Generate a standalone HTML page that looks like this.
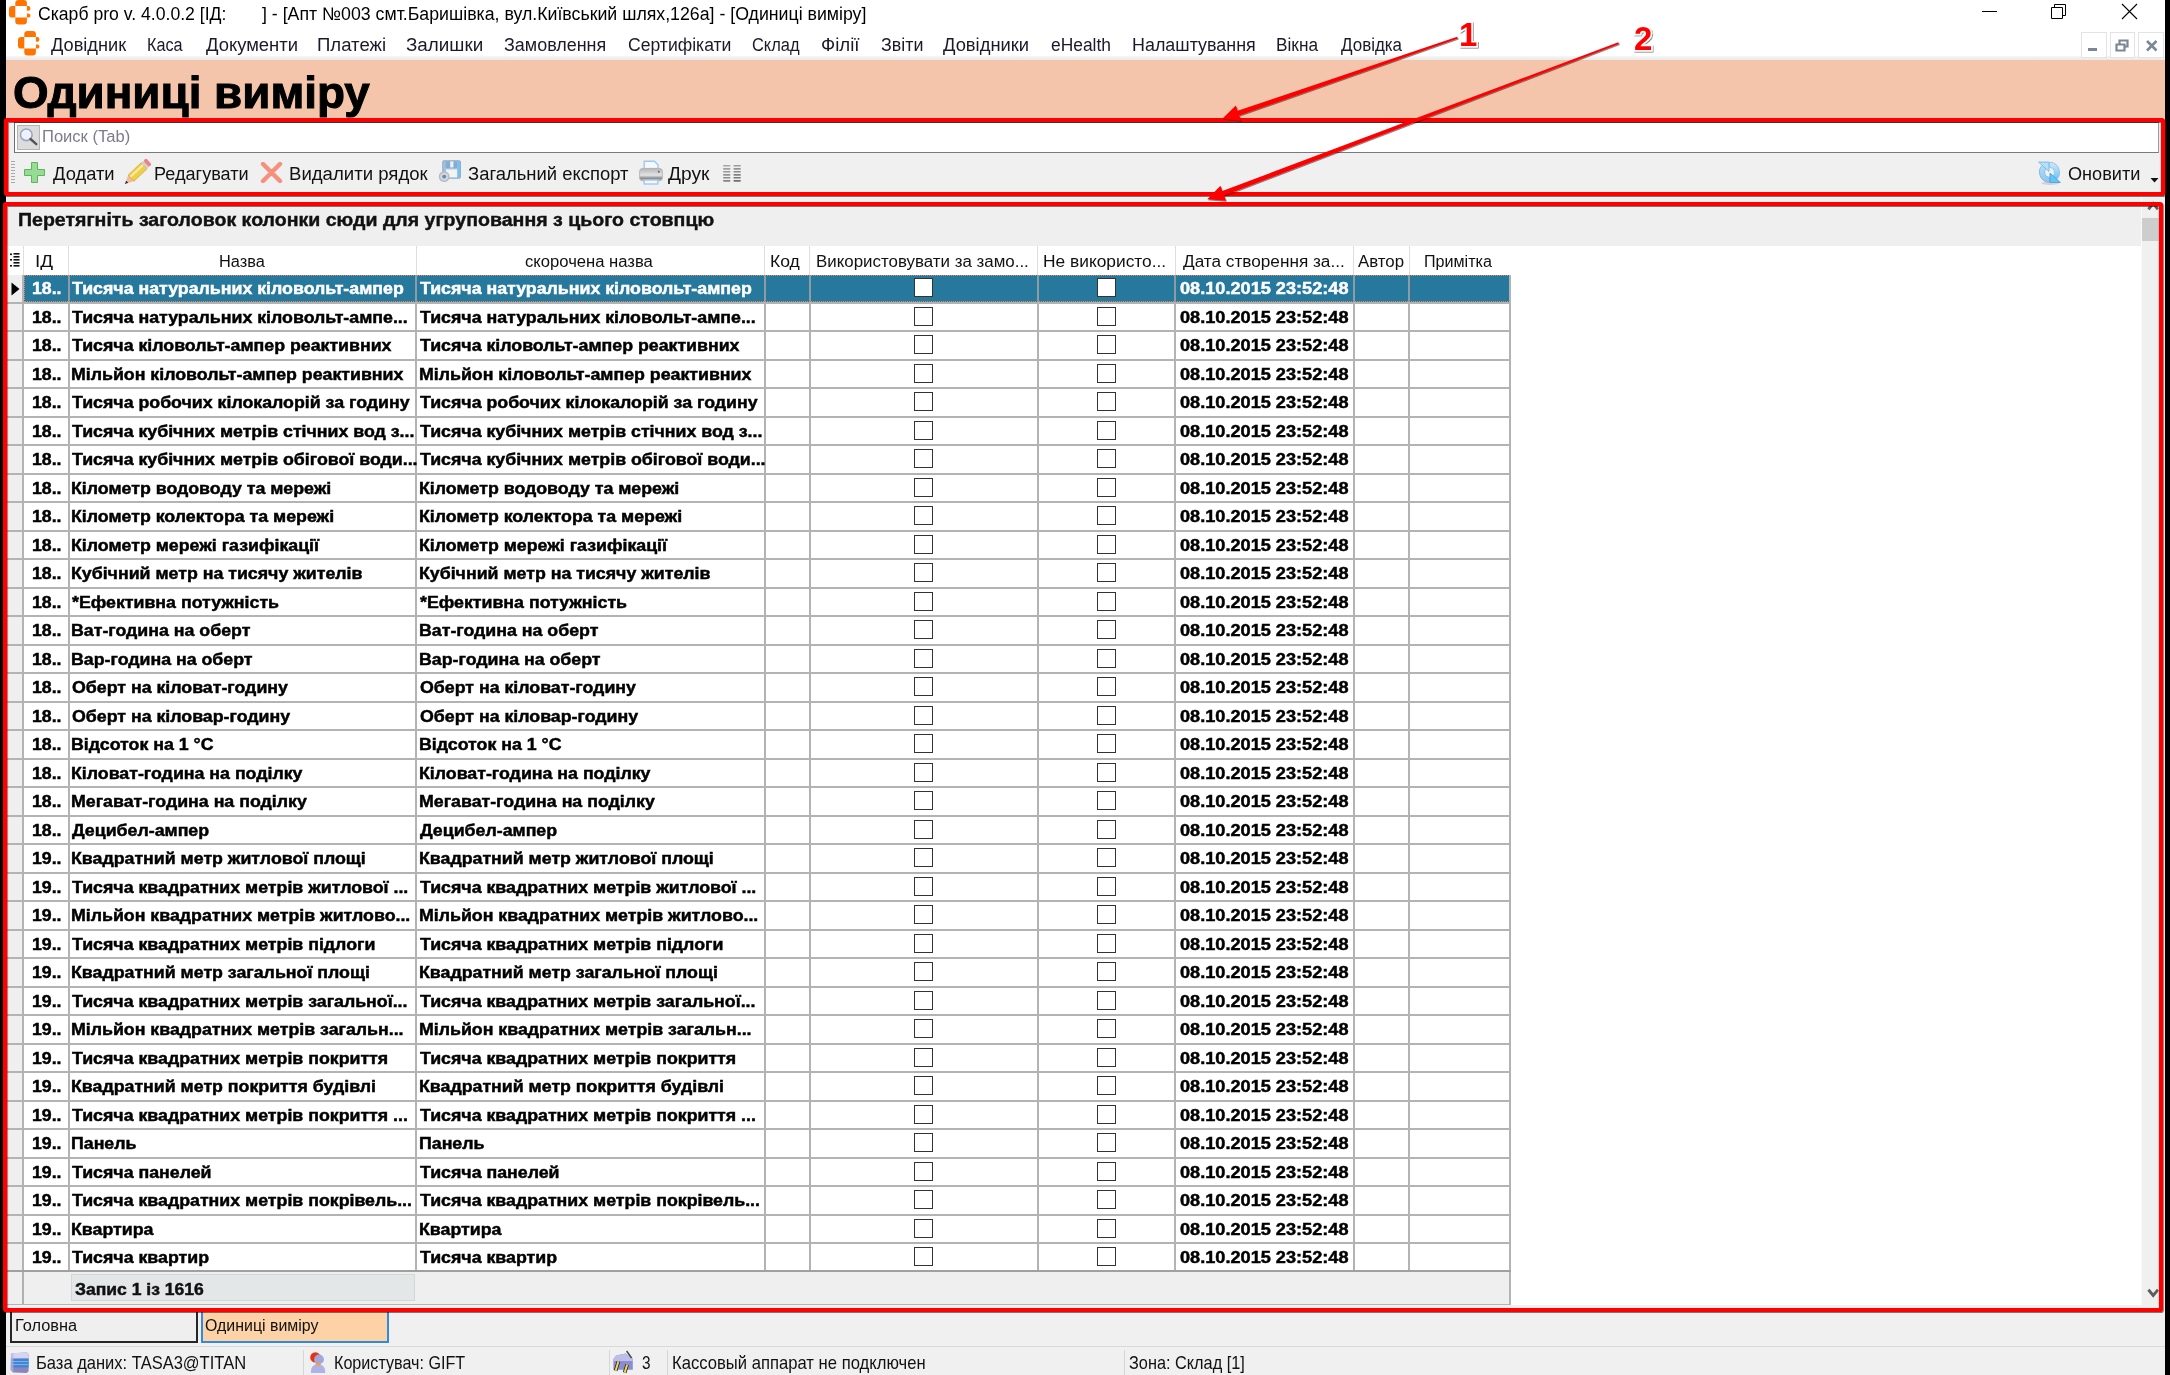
<!DOCTYPE html>
<html><head><meta charset="utf-8"><title>Одиниці виміру</title>
<style>
html,body{margin:0;padding:0;}
body{width:2170px;height:1375px;overflow:hidden;position:relative;background:#000;font-family:"Liberation Sans",sans-serif;}
.t{position:absolute;white-space:nowrap;transform-origin:0 0;}
</style></head><body>
<div style="position:absolute;left:6px;top:0px;width:2159px;height:56px;background:#fff"></div>
<div style="position:absolute;left:6px;top:56px;width:2159px;height:4px;background:linear-gradient(#f6f6f6,#e9e9e9)"></div>
<div style="position:absolute;left:6px;top:60px;width:2159px;height:58px;background:#f4c4ab"></div>
<div style="position:absolute;left:6px;top:118px;width:2159px;height:1257px;background:#f0f0f0"></div>
<div style="position:absolute;left:1982px;top:11px;width:15px;height:1px;background:#000"></div>
<svg style="position:absolute;left:2049px;top:1px" width="20" height="20"><path d="M2.5 6.5h11v11h-11z M5.5 6.5v-3h11v11h-3" fill="none" stroke="#000" stroke-width="1"/></svg>
<svg style="position:absolute;left:2120px;top:2px" width="20" height="20"><path d="M2 2L17 17M17 2L2 17" stroke="#000" stroke-width="1.1"/></svg>
<svg style="position:absolute;left:17.7px;top:31.3px" width="22" height="25" viewBox="0 0 22 25">
<g fill="#ff7400">
<path d="M6.3 6.1V3.2Q6.3 0 9.5 0H14.7Q17.9 0 17.9 3.2V6.1Z"/>
<path d="M6.3 6.1H3.2Q0 6.1 0 9.3V14.4Q0 17.6 3.2 17.6H6.3Z"/>
<path d="M6.3 17.6V21.2Q6.3 24.4 9.5 24.4H14.7Q17.9 24.4 17.9 21.2V17.6Z"/>
<path d="M17.9 6.1H19.3Q21.4 6.1 21.4 8.3V9.0Q21.4 10.7 19.3 10.7H17.9Z"/>
<path d="M17.9 13.5H19.3Q21.4 13.5 21.4 15.2V15.9Q21.4 17.6 19.3 17.6H17.9Z"/>
</g></svg>
<svg style="position:absolute;left:9px;top:-0.4px" width="22" height="25" viewBox="0 0 22 25">
<g fill="#ff7400">
<path d="M6.3 6.1V3.2Q6.3 0 9.5 0H14.7Q17.9 0 17.9 3.2V6.1Z"/>
<path d="M6.3 6.1H3.2Q0 6.1 0 9.3V14.4Q0 17.6 3.2 17.6H6.3Z"/>
<path d="M6.3 17.6V21.2Q6.3 24.4 9.5 24.4H14.7Q17.9 24.4 17.9 21.2V17.6Z"/>
<path d="M17.9 6.1H19.3Q21.4 6.1 21.4 8.3V9.0Q21.4 10.7 19.3 10.7H17.9Z"/>
<path d="M17.9 13.5H19.3Q21.4 13.5 21.4 15.2V15.9Q21.4 17.6 19.3 17.6H17.9Z"/>
</g></svg>
<div style="position:absolute;left:2081px;top:32px;width:25.5px;height:25.5px;border:1px solid #e3e3e3;box-sizing:border-box;background:#fff"></div>
<div style="position:absolute;left:2109.5px;top:32px;width:25.5px;height:25.5px;border:1px solid #e3e3e3;box-sizing:border-box;background:#fff"></div>
<div style="position:absolute;left:2138px;top:32px;width:25.5px;height:25.5px;border:1px solid #e3e3e3;box-sizing:border-box;background:#fff"></div>
<div style="position:absolute;left:2088px;top:48px;width:9px;height:3px;background:#7b8794"></div>
<svg style="position:absolute;left:2115px;top:38px" width="15" height="15"><path d="M1.5 6.5h8v6h-8z M4.5 5.5v-3h8v6h-3" fill="none" stroke="#7b8794" stroke-width="2.2"/></svg>
<svg style="position:absolute;left:2145px;top:39px" width="14" height="14"><path d="M2 2L11.5 11.5M11.5 2L2 11.5" stroke="#7b8794" stroke-width="2.6"/></svg>
<div style="position:absolute;left:14px;top:122px;width:2145px;height:31px;background:#fff;border-left:1px solid #6e6e6e;border-top:1px solid #6e6e6e;border-bottom:1px solid #7a7a7a;border-right:1px solid #9a9a9a;box-sizing:border-box"></div>
<div style="position:absolute;left:17px;top:125px;width:23.299999999999997px;height:25px;background:#dcdcdc;border:1px solid #b4b4b4;box-sizing:border-box"></div>
<svg style="position:absolute;left:17px;top:125px" width="24" height="25"><circle cx="9.3" cy="9.8" r="5.8" fill="#eef2ff" stroke="#9aa6bc" stroke-width="1.6"/><path d="M13.5 14l5.8 5.2" stroke="#555" stroke-width="2.4" stroke-linecap="round"/></svg>
<div style="position:absolute;left:10.5px;top:160.5px;width:4.5px;height:1.3000000000000114px;background:#a8a8a8"></div>
<div style="position:absolute;left:10.5px;top:163.5px;width:4.5px;height:1.3000000000000114px;background:#a8a8a8"></div>
<div style="position:absolute;left:10.5px;top:166.5px;width:4.5px;height:1.3000000000000114px;background:#a8a8a8"></div>
<div style="position:absolute;left:10.5px;top:169.5px;width:4.5px;height:1.3000000000000114px;background:#a8a8a8"></div>
<div style="position:absolute;left:10.5px;top:172.5px;width:4.5px;height:1.3000000000000114px;background:#a8a8a8"></div>
<div style="position:absolute;left:10.5px;top:175.5px;width:4.5px;height:1.3000000000000114px;background:#a8a8a8"></div>
<div style="position:absolute;left:10.5px;top:178.5px;width:4.5px;height:1.3000000000000114px;background:#a8a8a8"></div>
<div style="position:absolute;left:10.5px;top:181.5px;width:4.5px;height:1.3000000000000114px;background:#a8a8a8"></div>
<svg style="position:absolute;left:24px;top:162px" width="21" height="21"><path d="M7.5 0.5h6v7h7v6h-7v7h-6v-7h-7v-6h7z" fill="#97dc94" stroke="#5fb45c" stroke-width="1"/></svg>
<svg style="position:absolute;left:120px;top:155px" width="40" height="35">
<g transform="translate(4.8 29.1) rotate(-43.5)">
<path d="M0 0L3.6 -1.7V1.7Z" fill="#333"/><path d="M3.6 -1.7L8.6 -4.2V4.2L3.6 1.7Z" fill="#f6b89c"/>
<rect x="8.6" y="-4.2" width="18" height="8.4" fill="#f0cf48" stroke="#c9a436" stroke-width="0.7"/><rect x="9" y="-2.4" width="17.4" height="2" fill="#fcecaa"/>
<rect x="26.6" y="-4.2" width="3" height="8.4" fill="#cfcfcf"/><rect x="29.4" y="-4.2" width="3.8" height="8.4" rx="1.6" fill="#ee8282"/>
</g></svg>
<svg style="position:absolute;left:260px;top:162px" width="23" height="21"><path d="M3 2l8.5 8.5M20 2l-8.5 8.5M3 19l8.5-8.5M20 19l-8.5-8.5" stroke="#f4907c" stroke-width="4.4" stroke-linecap="round"/></svg>
<svg style="position:absolute;left:430px;top:155px" width="40" height="35">
<rect x="12.8" y="5.8" width="17.6" height="17.4" rx="1" fill="#a4c2e0" stroke="#8aa6c8" stroke-width="1"/>
<rect x="15.6" y="6.4" width="11.8" height="6.6" fill="#86acd4"/><rect x="20.2" y="6.4" width="3.2" height="6" fill="#eef2f6"/>
<rect x="16" y="14.4" width="11" height="8" fill="#f3f3f3"/><rect x="27.8" y="6.5" width="2.4" height="16.4" fill="#78c4e8"/>
<circle cx="14.2" cy="21.6" r="4.8" fill="#d2d6da" stroke="#b4b9bf" stroke-width="1.2"/><circle cx="14.2" cy="21.6" r="1.9" fill="#5a8cb8"/>
</svg>
<svg style="position:absolute;left:630px;top:155px" width="40" height="35">
<defs><linearGradient id="pg" x1="0" y1="0" x2="0" y2="1"><stop offset="0" stop-color="#b4b4b4"/><stop offset="0.55" stop-color="#e4e4e4"/><stop offset="0.8" stop-color="#8a8a8a"/><stop offset="1" stop-color="#c8c8c8"/></linearGradient></defs>
<path d="M14.2 6.2H24.4L28 9.8V14H14.2Z" fill="#f4f9ff" stroke="#a2c8ee" stroke-width="1.4"/>
<rect x="9.6" y="13.4" width="22.8" height="12.4" rx="3" fill="url(#pg)" stroke="#b0b0b0" stroke-width="0.8"/>
<circle cx="28.8" cy="16.8" r="1" fill="#666"/>
<rect x="14.2" y="25" width="13.6" height="4" fill="#f4f9ff" stroke="#a2c8ee" stroke-width="1.4"/>
</svg>
<svg style="position:absolute;left:715px;top:158px" width="35" height="30"><rect x="8.1" y="6.9" width="7.3" height="1.7" rx="0.6" fill="#a6a6a6"/><rect x="8.1" y="10.0" width="7.3" height="1.7" rx="0.6" fill="#a0a0a0"/><rect x="8.1" y="12.9" width="7.3" height="1.7" rx="0.6" fill="#999"/><rect x="8.1" y="16.0" width="7.3" height="1.7" rx="0.6" fill="#939393"/><rect x="8.1" y="18.9" width="7.3" height="1.7" rx="0.6" fill="#8c8c8c"/><rect x="8.1" y="22.0" width="7.3" height="1.7" rx="0.6" fill="#858585"/><rect x="18.5" y="6.9" width="7.3" height="1.7" rx="0.6" fill="#9c9c9c"/><rect x="18.5" y="10.0" width="7.3" height="1.7" rx="0.6" fill="#939393"/><rect x="18.5" y="12.9" width="7.3" height="1.7" rx="0.6" fill="#8a8a8a"/><rect x="18.5" y="16.0" width="7.3" height="1.7" rx="0.6" fill="#818181"/><rect x="18.5" y="18.9" width="7.3" height="1.7" rx="0.6" fill="#787878"/><rect x="18.5" y="22.0" width="7.3" height="1.7" rx="0.6" fill="#707070"/></svg>
<svg style="position:absolute;left:2030px;top:155px" width="40" height="35">
<defs><linearGradient id="rgL" x1="0" y1="0" x2="0" y2="1"><stop offset="0" stop-color="#b8e2fb"/><stop offset="1" stop-color="#8cc4ee"/></linearGradient>
<linearGradient id="rgR" x1="0" y1="0" x2="0" y2="1"><stop offset="0" stop-color="#d4e8f6"/><stop offset="1" stop-color="#5cc4f8"/></linearGradient></defs>
<ellipse cx="20" cy="28.3" rx="9" ry="1.6" fill="#000" opacity="0.12"/>
<path d="M19.5 27.3A10 10 0 0 1 13.8 9.1L16.6 13.2A5 5 0 0 0 19.5 22.3Z" fill="url(#rgL)" stroke="#7ab4e4" stroke-width="0.9"/>
<path d="M8.6 7.1H19V16.5Z" fill="#b4e0fa" stroke="#7ab4e4" stroke-width="0.9" stroke-linejoin="round"/>
<path d="M19.5 7.3A10 10 0 0 1 25.2 25.5L22.4 21.4A5 5 0 0 0 19.5 12.3Z" fill="url(#rgR)" stroke="#8cc0e4" stroke-width="0.9"/>
<path d="M30.4 27.5H20V18.1Z" fill="#5ec6f8" stroke="#5a9cd0" stroke-width="0.9" stroke-linejoin="round"/>
</svg>
<svg style="position:absolute;left:2150px;top:177px" width="10" height="7"><path d="M0.5 1h8l-4 4.5z" fill="#111"/></svg>
<div style="position:absolute;left:7px;top:206px;width:2135px;height:1099px;background:#fff"></div>
<div style="position:absolute;left:7px;top:206px;width:2133.5px;height:40px;background:#efefef"></div>
<div style="position:absolute;left:2142px;top:202px;width:21px;height:1106px;background:#f0f0f0"></div>
<div style="position:absolute;left:2140.5px;top:196px;width:1.5px;height:1109px;background:#fafafa"></div>
<div style="position:absolute;left:2142px;top:218px;width:21px;height:23px;background:#cdcdcd"></div>
<svg style="position:absolute;left:2147px;top:200px" width="12" height="11"><path d="M1.4 9.2l4.8-5.6 4.8 5.6" fill="none" stroke="#5e5e5e" stroke-width="2.9"/></svg>
<svg style="position:absolute;left:2147px;top:1288px" width="12" height="11"><path d="M1.4 1.8l4.8 5.6 4.8-5.6" fill="none" stroke="#5e5e5e" stroke-width="2.9"/></svg>
<div style="position:absolute;left:22.5px;top:246px;width:1.0px;height:29px;background:#dedede"></div>
<div style="position:absolute;left:67.8px;top:246px;width:1.0px;height:29px;background:#dedede"></div>
<div style="position:absolute;left:415.7px;top:246px;width:1.0px;height:29px;background:#dedede"></div>
<div style="position:absolute;left:763.8px;top:246px;width:1.0px;height:29px;background:#dedede"></div>
<div style="position:absolute;left:808.8px;top:246px;width:1.0px;height:29px;background:#dedede"></div>
<div style="position:absolute;left:1037.1px;top:246px;width:1.0px;height:29px;background:#dedede"></div>
<div style="position:absolute;left:1174.7px;top:246px;width:1.0px;height:29px;background:#dedede"></div>
<div style="position:absolute;left:1353.2px;top:246px;width:1.0px;height:29px;background:#dedede"></div>
<div style="position:absolute;left:1408.5px;top:246px;width:1.0px;height:29px;background:#dedede"></div>
<svg style="position:absolute;left:10px;top:253px" width="11" height="15"><g fill="#111"><rect x="0" y="0.5" width="2" height="1.6"/><rect x="3.5" y="0" width="6" height="1.6"/><rect x="3.5" y="3" width="6" height="1.6"/><rect x="0" y="6" width="2" height="1.6"/><rect x="3.5" y="6" width="6" height="1.6"/><rect x="3.5" y="9" width="6" height="1.6"/><rect x="0" y="12" width="2" height="1.6"/><rect x="3.5" y="12" width="6" height="1.6"/></g></svg>
<div style="position:absolute;left:7px;top:275px;width:16px;height:997px;background:#efefef"></div>
<div style="position:absolute;left:23.5px;top:274.6px;width:1486.5px;height:27.69999999999999px;background:#26789d"></div>
<div style="position:absolute;left:23.5px;top:274.6px;width:1486.5px;height:27.69999999999999px;border:1px dotted #e08a5a;box-sizing:border-box"></div>
<div style="position:absolute;left:7px;top:275px;width:16px;height:27px;background:#efefef"></div>
<svg style="position:absolute;left:11px;top:282px" width="9" height="14"><path d="M0.5 0.5L8.5 7L0.5 13.5z" fill="#000"/></svg>
<div style="position:absolute;left:913.7px;top:278.20000000000005px;width:19.0px;height:19.0px;background:#fff;border:1.5px solid #333;box-sizing:border-box"></div>
<div style="position:absolute;left:1096.8px;top:278.20000000000005px;width:19.0px;height:19.0px;background:#fff;border:1.5px solid #333;box-sizing:border-box"></div>
<div style="position:absolute;left:7px;top:302px;width:1503px;height:2px;background:#b3b3b3"></div>
<div style="position:absolute;left:913.7px;top:306.70000000000005px;width:19.0px;height:19.0px;background:#fff;border:1.5px solid #333;box-sizing:border-box"></div>
<div style="position:absolute;left:1096.8px;top:306.70000000000005px;width:19.0px;height:19.0px;background:#fff;border:1.5px solid #333;box-sizing:border-box"></div>
<div style="position:absolute;left:7px;top:330px;width:1503px;height:2px;background:#b3b3b3"></div>
<div style="position:absolute;left:913.7px;top:335.20000000000005px;width:19.0px;height:19.0px;background:#fff;border:1.5px solid #333;box-sizing:border-box"></div>
<div style="position:absolute;left:1096.8px;top:335.20000000000005px;width:19.0px;height:19.0px;background:#fff;border:1.5px solid #333;box-sizing:border-box"></div>
<div style="position:absolute;left:7px;top:359px;width:1503px;height:2px;background:#b3b3b3"></div>
<div style="position:absolute;left:913.7px;top:363.70000000000005px;width:19.0px;height:19.0px;background:#fff;border:1.5px solid #333;box-sizing:border-box"></div>
<div style="position:absolute;left:1096.8px;top:363.70000000000005px;width:19.0px;height:19.0px;background:#fff;border:1.5px solid #333;box-sizing:border-box"></div>
<div style="position:absolute;left:7px;top:387px;width:1503px;height:2px;background:#b3b3b3"></div>
<div style="position:absolute;left:913.7px;top:392.20000000000005px;width:19.0px;height:19.0px;background:#fff;border:1.5px solid #333;box-sizing:border-box"></div>
<div style="position:absolute;left:1096.8px;top:392.20000000000005px;width:19.0px;height:19.0px;background:#fff;border:1.5px solid #333;box-sizing:border-box"></div>
<div style="position:absolute;left:7px;top:416px;width:1503px;height:2px;background:#b3b3b3"></div>
<div style="position:absolute;left:913.7px;top:420.70000000000005px;width:19.0px;height:19.0px;background:#fff;border:1.5px solid #333;box-sizing:border-box"></div>
<div style="position:absolute;left:1096.8px;top:420.70000000000005px;width:19.0px;height:19.0px;background:#fff;border:1.5px solid #333;box-sizing:border-box"></div>
<div style="position:absolute;left:7px;top:444px;width:1503px;height:2px;background:#b3b3b3"></div>
<div style="position:absolute;left:913.7px;top:449.20000000000005px;width:19.0px;height:19.0px;background:#fff;border:1.5px solid #333;box-sizing:border-box"></div>
<div style="position:absolute;left:1096.8px;top:449.20000000000005px;width:19.0px;height:19.0px;background:#fff;border:1.5px solid #333;box-sizing:border-box"></div>
<div style="position:absolute;left:7px;top:473px;width:1503px;height:2px;background:#b3b3b3"></div>
<div style="position:absolute;left:913.7px;top:477.70000000000005px;width:19.0px;height:19.0px;background:#fff;border:1.5px solid #333;box-sizing:border-box"></div>
<div style="position:absolute;left:1096.8px;top:477.70000000000005px;width:19.0px;height:19.0px;background:#fff;border:1.5px solid #333;box-sizing:border-box"></div>
<div style="position:absolute;left:7px;top:501px;width:1503px;height:2px;background:#b3b3b3"></div>
<div style="position:absolute;left:913.7px;top:506.20000000000005px;width:19.0px;height:19.0px;background:#fff;border:1.5px solid #333;box-sizing:border-box"></div>
<div style="position:absolute;left:1096.8px;top:506.20000000000005px;width:19.0px;height:19.0px;background:#fff;border:1.5px solid #333;box-sizing:border-box"></div>
<div style="position:absolute;left:7px;top:530px;width:1503px;height:2px;background:#b3b3b3"></div>
<div style="position:absolute;left:913.7px;top:534.7px;width:19.0px;height:19.0px;background:#fff;border:1.5px solid #333;box-sizing:border-box"></div>
<div style="position:absolute;left:1096.8px;top:534.7px;width:19.0px;height:19.0px;background:#fff;border:1.5px solid #333;box-sizing:border-box"></div>
<div style="position:absolute;left:7px;top:558px;width:1503px;height:2px;background:#b3b3b3"></div>
<div style="position:absolute;left:913.7px;top:563.2px;width:19.0px;height:19.0px;background:#fff;border:1.5px solid #333;box-sizing:border-box"></div>
<div style="position:absolute;left:1096.8px;top:563.2px;width:19.0px;height:19.0px;background:#fff;border:1.5px solid #333;box-sizing:border-box"></div>
<div style="position:absolute;left:7px;top:587px;width:1503px;height:2px;background:#b3b3b3"></div>
<div style="position:absolute;left:913.7px;top:591.7px;width:19.0px;height:19.0px;background:#fff;border:1.5px solid #333;box-sizing:border-box"></div>
<div style="position:absolute;left:1096.8px;top:591.7px;width:19.0px;height:19.0px;background:#fff;border:1.5px solid #333;box-sizing:border-box"></div>
<div style="position:absolute;left:7px;top:615px;width:1503px;height:2px;background:#b3b3b3"></div>
<div style="position:absolute;left:913.7px;top:620.2px;width:19.0px;height:19.0px;background:#fff;border:1.5px solid #333;box-sizing:border-box"></div>
<div style="position:absolute;left:1096.8px;top:620.2px;width:19.0px;height:19.0px;background:#fff;border:1.5px solid #333;box-sizing:border-box"></div>
<div style="position:absolute;left:7px;top:644px;width:1503px;height:2px;background:#b3b3b3"></div>
<div style="position:absolute;left:913.7px;top:648.7px;width:19.0px;height:19.0px;background:#fff;border:1.5px solid #333;box-sizing:border-box"></div>
<div style="position:absolute;left:1096.8px;top:648.7px;width:19.0px;height:19.0px;background:#fff;border:1.5px solid #333;box-sizing:border-box"></div>
<div style="position:absolute;left:7px;top:672px;width:1503px;height:2px;background:#b3b3b3"></div>
<div style="position:absolute;left:913.7px;top:677.2px;width:19.0px;height:19.0px;background:#fff;border:1.5px solid #333;box-sizing:border-box"></div>
<div style="position:absolute;left:1096.8px;top:677.2px;width:19.0px;height:19.0px;background:#fff;border:1.5px solid #333;box-sizing:border-box"></div>
<div style="position:absolute;left:7px;top:701px;width:1503px;height:2px;background:#b3b3b3"></div>
<div style="position:absolute;left:913.7px;top:705.7px;width:19.0px;height:19.0px;background:#fff;border:1.5px solid #333;box-sizing:border-box"></div>
<div style="position:absolute;left:1096.8px;top:705.7px;width:19.0px;height:19.0px;background:#fff;border:1.5px solid #333;box-sizing:border-box"></div>
<div style="position:absolute;left:7px;top:729px;width:1503px;height:2px;background:#b3b3b3"></div>
<div style="position:absolute;left:913.7px;top:734.2px;width:19.0px;height:19.0px;background:#fff;border:1.5px solid #333;box-sizing:border-box"></div>
<div style="position:absolute;left:1096.8px;top:734.2px;width:19.0px;height:19.0px;background:#fff;border:1.5px solid #333;box-sizing:border-box"></div>
<div style="position:absolute;left:7px;top:758px;width:1503px;height:2px;background:#b3b3b3"></div>
<div style="position:absolute;left:913.7px;top:762.7px;width:19.0px;height:19.0px;background:#fff;border:1.5px solid #333;box-sizing:border-box"></div>
<div style="position:absolute;left:1096.8px;top:762.7px;width:19.0px;height:19.0px;background:#fff;border:1.5px solid #333;box-sizing:border-box"></div>
<div style="position:absolute;left:7px;top:786px;width:1503px;height:2px;background:#b3b3b3"></div>
<div style="position:absolute;left:913.7px;top:791.2px;width:19.0px;height:19.0px;background:#fff;border:1.5px solid #333;box-sizing:border-box"></div>
<div style="position:absolute;left:1096.8px;top:791.2px;width:19.0px;height:19.0px;background:#fff;border:1.5px solid #333;box-sizing:border-box"></div>
<div style="position:absolute;left:7px;top:815px;width:1503px;height:2px;background:#b3b3b3"></div>
<div style="position:absolute;left:913.7px;top:819.7px;width:19.0px;height:19.0px;background:#fff;border:1.5px solid #333;box-sizing:border-box"></div>
<div style="position:absolute;left:1096.8px;top:819.7px;width:19.0px;height:19.0px;background:#fff;border:1.5px solid #333;box-sizing:border-box"></div>
<div style="position:absolute;left:7px;top:843px;width:1503px;height:2px;background:#b3b3b3"></div>
<div style="position:absolute;left:913.7px;top:848.2px;width:19.0px;height:19.0px;background:#fff;border:1.5px solid #333;box-sizing:border-box"></div>
<div style="position:absolute;left:1096.8px;top:848.2px;width:19.0px;height:19.0px;background:#fff;border:1.5px solid #333;box-sizing:border-box"></div>
<div style="position:absolute;left:7px;top:872px;width:1503px;height:2px;background:#b3b3b3"></div>
<div style="position:absolute;left:913.7px;top:876.7px;width:19.0px;height:19.0px;background:#fff;border:1.5px solid #333;box-sizing:border-box"></div>
<div style="position:absolute;left:1096.8px;top:876.7px;width:19.0px;height:19.0px;background:#fff;border:1.5px solid #333;box-sizing:border-box"></div>
<div style="position:absolute;left:7px;top:900px;width:1503px;height:2px;background:#b3b3b3"></div>
<div style="position:absolute;left:913.7px;top:905.2px;width:19.0px;height:19.0px;background:#fff;border:1.5px solid #333;box-sizing:border-box"></div>
<div style="position:absolute;left:1096.8px;top:905.2px;width:19.0px;height:19.0px;background:#fff;border:1.5px solid #333;box-sizing:border-box"></div>
<div style="position:absolute;left:7px;top:929px;width:1503px;height:2px;background:#b3b3b3"></div>
<div style="position:absolute;left:913.7px;top:933.7px;width:19.0px;height:19.0px;background:#fff;border:1.5px solid #333;box-sizing:border-box"></div>
<div style="position:absolute;left:1096.8px;top:933.7px;width:19.0px;height:19.0px;background:#fff;border:1.5px solid #333;box-sizing:border-box"></div>
<div style="position:absolute;left:7px;top:957px;width:1503px;height:2px;background:#b3b3b3"></div>
<div style="position:absolute;left:913.7px;top:962.2px;width:19.0px;height:19.0px;background:#fff;border:1.5px solid #333;box-sizing:border-box"></div>
<div style="position:absolute;left:1096.8px;top:962.2px;width:19.0px;height:19.0px;background:#fff;border:1.5px solid #333;box-sizing:border-box"></div>
<div style="position:absolute;left:7px;top:986px;width:1503px;height:2px;background:#b3b3b3"></div>
<div style="position:absolute;left:913.7px;top:990.7px;width:19.0px;height:19.0px;background:#fff;border:1.5px solid #333;box-sizing:border-box"></div>
<div style="position:absolute;left:1096.8px;top:990.7px;width:19.0px;height:19.0px;background:#fff;border:1.5px solid #333;box-sizing:border-box"></div>
<div style="position:absolute;left:7px;top:1014px;width:1503px;height:2px;background:#b3b3b3"></div>
<div style="position:absolute;left:913.7px;top:1019.2px;width:19.0px;height:19.0px;background:#fff;border:1.5px solid #333;box-sizing:border-box"></div>
<div style="position:absolute;left:1096.8px;top:1019.2px;width:19.0px;height:19.0px;background:#fff;border:1.5px solid #333;box-sizing:border-box"></div>
<div style="position:absolute;left:7px;top:1043px;width:1503px;height:2px;background:#b3b3b3"></div>
<div style="position:absolute;left:913.7px;top:1047.6999999999998px;width:19.0px;height:19.0px;background:#fff;border:1.5px solid #333;box-sizing:border-box"></div>
<div style="position:absolute;left:1096.8px;top:1047.6999999999998px;width:19.0px;height:19.0px;background:#fff;border:1.5px solid #333;box-sizing:border-box"></div>
<div style="position:absolute;left:7px;top:1071px;width:1503px;height:2px;background:#b3b3b3"></div>
<div style="position:absolute;left:913.7px;top:1076.1999999999998px;width:19.0px;height:19.0px;background:#fff;border:1.5px solid #333;box-sizing:border-box"></div>
<div style="position:absolute;left:1096.8px;top:1076.1999999999998px;width:19.0px;height:19.0px;background:#fff;border:1.5px solid #333;box-sizing:border-box"></div>
<div style="position:absolute;left:7px;top:1100px;width:1503px;height:2px;background:#b3b3b3"></div>
<div style="position:absolute;left:913.7px;top:1104.6999999999998px;width:19.0px;height:19.0px;background:#fff;border:1.5px solid #333;box-sizing:border-box"></div>
<div style="position:absolute;left:1096.8px;top:1104.6999999999998px;width:19.0px;height:19.0px;background:#fff;border:1.5px solid #333;box-sizing:border-box"></div>
<div style="position:absolute;left:7px;top:1128px;width:1503px;height:2px;background:#b3b3b3"></div>
<div style="position:absolute;left:913.7px;top:1133.1999999999998px;width:19.0px;height:19.0px;background:#fff;border:1.5px solid #333;box-sizing:border-box"></div>
<div style="position:absolute;left:1096.8px;top:1133.1999999999998px;width:19.0px;height:19.0px;background:#fff;border:1.5px solid #333;box-sizing:border-box"></div>
<div style="position:absolute;left:7px;top:1157px;width:1503px;height:2px;background:#b3b3b3"></div>
<div style="position:absolute;left:913.7px;top:1161.6999999999998px;width:19.0px;height:19.0px;background:#fff;border:1.5px solid #333;box-sizing:border-box"></div>
<div style="position:absolute;left:1096.8px;top:1161.6999999999998px;width:19.0px;height:19.0px;background:#fff;border:1.5px solid #333;box-sizing:border-box"></div>
<div style="position:absolute;left:7px;top:1185px;width:1503px;height:2px;background:#b3b3b3"></div>
<div style="position:absolute;left:913.7px;top:1190.1999999999998px;width:19.0px;height:19.0px;background:#fff;border:1.5px solid #333;box-sizing:border-box"></div>
<div style="position:absolute;left:1096.8px;top:1190.1999999999998px;width:19.0px;height:19.0px;background:#fff;border:1.5px solid #333;box-sizing:border-box"></div>
<div style="position:absolute;left:7px;top:1214px;width:1503px;height:2px;background:#b3b3b3"></div>
<div style="position:absolute;left:913.7px;top:1218.6999999999998px;width:19.0px;height:19.0px;background:#fff;border:1.5px solid #333;box-sizing:border-box"></div>
<div style="position:absolute;left:1096.8px;top:1218.6999999999998px;width:19.0px;height:19.0px;background:#fff;border:1.5px solid #333;box-sizing:border-box"></div>
<div style="position:absolute;left:7px;top:1242px;width:1503px;height:2px;background:#b3b3b3"></div>
<div style="position:absolute;left:913.7px;top:1247.1999999999998px;width:19.0px;height:19.0px;background:#fff;border:1.5px solid #333;box-sizing:border-box"></div>
<div style="position:absolute;left:1096.8px;top:1247.1999999999998px;width:19.0px;height:19.0px;background:#fff;border:1.5px solid #333;box-sizing:border-box"></div>
<div style="position:absolute;left:22px;top:275px;width:2px;height:997px;background:#b3b3b3"></div>
<div style="position:absolute;left:68px;top:275px;width:2px;height:997px;background:#b3b3b3"></div>
<div style="position:absolute;left:68px;top:275px;width:2px;height:27px;background:#8e9ba3"></div>
<div style="position:absolute;left:415px;top:275px;width:2px;height:997px;background:#b3b3b3"></div>
<div style="position:absolute;left:415px;top:275px;width:2px;height:27px;background:#8e9ba3"></div>
<div style="position:absolute;left:764px;top:275px;width:2px;height:997px;background:#b3b3b3"></div>
<div style="position:absolute;left:764px;top:275px;width:2px;height:27px;background:#8e9ba3"></div>
<div style="position:absolute;left:809px;top:275px;width:2px;height:997px;background:#b3b3b3"></div>
<div style="position:absolute;left:809px;top:275px;width:2px;height:27px;background:#8e9ba3"></div>
<div style="position:absolute;left:1037px;top:275px;width:2px;height:997px;background:#b3b3b3"></div>
<div style="position:absolute;left:1037px;top:275px;width:2px;height:27px;background:#8e9ba3"></div>
<div style="position:absolute;left:1174px;top:275px;width:2px;height:997px;background:#b3b3b3"></div>
<div style="position:absolute;left:1174px;top:275px;width:2px;height:27px;background:#8e9ba3"></div>
<div style="position:absolute;left:1353px;top:275px;width:2px;height:997px;background:#b3b3b3"></div>
<div style="position:absolute;left:1353px;top:275px;width:2px;height:27px;background:#8e9ba3"></div>
<div style="position:absolute;left:1408px;top:275px;width:2px;height:997px;background:#b3b3b3"></div>
<div style="position:absolute;left:1408px;top:275px;width:2px;height:27px;background:#8e9ba3"></div>
<div style="position:absolute;left:1509px;top:275px;width:2px;height:997px;background:#b3b3b3"></div>
<div style="position:absolute;left:7px;top:1270px;width:1503.5px;height:2.2000000000000455px;background:#a0a0a0"></div>
<div style="position:absolute;left:7px;top:1272.2px;width:1503.5px;height:31.799999999999955px;background:#efefef"></div>
<div style="position:absolute;left:22.4px;top:1272px;width:1.4000000000000021px;height:32px;background:#b0b0b0"></div>
<div style="position:absolute;left:70.8px;top:1274.4px;width:344.0px;height:27.09999999999991px;background:#e4e7e8;border:1px solid #d6d6d6;box-sizing:border-box"></div>
<div style="position:absolute;left:7px;top:1304px;width:1503.5px;height:1.400000000000091px;background:#b4b4b4"></div>
<div style="position:absolute;left:1509px;top:1272px;width:1.5px;height:33px;background:#b4b4b4"></div>
<div style="position:absolute;left:10px;top:1309px;width:187.5px;height:34px;background:#efefef;border:2px solid #262626;box-sizing:border-box"></div>
<div style="position:absolute;left:201px;top:1309px;width:187.5px;height:34px;background:#fdd2a6;border:2px solid #2f8ae0;box-sizing:border-box"></div>
<div style="position:absolute;left:6px;top:1346px;width:2159px;height:1.2000000000000455px;background:#d9d9d9"></div>
<div style="position:absolute;left:303.0px;top:1350px;width:1.1999999999999886px;height:25px;background:#d6d6d6"></div>
<div style="position:absolute;left:608.9px;top:1350px;width:1.2000000000000455px;height:25px;background:#d6d6d6"></div>
<div style="position:absolute;left:667.3px;top:1350px;width:1.2000000000000455px;height:25px;background:#d6d6d6"></div>
<div style="position:absolute;left:1124.0px;top:1350px;width:1.2000000000000455px;height:25px;background:#d6d6d6"></div>
<svg style="position:absolute;left:5px;top:1347px" width="30" height="28">
<path d="M6 6.2L22 5.6L23.6 7.2V24.2L21.6 25.9L8 25.4L5.6 23Z" fill="#8c86bc"/>
<path d="M6 6.2L22 5.6L23.6 7.2L23.6 11.4L6.2 11.8Z" fill="#d8d4f0"/>
<rect x="6" y="11.6" width="17.6" height="8.8" fill="#3a86d8"/>
<path d="M6.4 14.6H23.4M6.4 17.6H23.4" stroke="#9cb6e0" stroke-width="0.9"/>
<path d="M6 6.5V23L8.4 25.4V7Z" fill="#b8b4e0" opacity="0.7"/>
</svg>
<svg style="position:absolute;left:303px;top:1347px" width="30" height="28">
<circle cx="12.4" cy="10.4" r="5.2" fill="#e63212"/>
<path d="M7.8 26Q7.4 17.6 15 17Q22.6 17.6 22.4 26Z" fill="#aeb2e6"/>
<circle cx="16" cy="12.4" r="4.9" fill="#a2a8de"/>
<ellipse cx="15.2" cy="17" rx="2.8" ry="1.5" fill="#e8a050"/>
</svg>
<svg style="position:absolute;left:608px;top:1347px" width="30" height="28">
<path d="M5.4 12.2L8 8.6L17.6 6.6L24.8 11.6V22.8H5.4Z" fill="#8a8dd2"/>
<path d="M5.4 12.2L8 8.6L17.6 6.6L24.8 11.6V14H5.4Z" fill="#bdbde8"/>
<path d="M18.6 4L23.6 11" stroke="#444" stroke-width="1.4"/>
<path d="M7.6 23.8L10.4 14.4M16.6 25.6L19.2 17.6" stroke="#222" stroke-width="3.6"/>
<path d="M7.6 23.8L10.4 14.4M16.6 25.6L19.2 17.6" stroke="#f0d850" stroke-width="2"/>
</svg>
<div class="t" style="left:37.60px;top:5.00px;font-size:18px;line-height:18px;font-weight:400;color:#000;transform:scaleX(0.9785);">Скарб pro v. 4.0.0.2 [ІД:</div>
<div class="t" style="left:261.60px;top:5.00px;font-size:18px;line-height:18px;font-weight:400;color:#000;transform:scaleX(0.9849);">] - [Апт №003 смт.Баришівка, вул.Київський шлях,126а] - [Одиниці виміру]</div>
<div class="t" style="left:50.90px;top:35.50px;font-size:18px;line-height:18px;font-weight:400;color:#1a1a2a;transform:scaleX(1.0112);">Довідник</div>
<div class="t" style="left:147.10px;top:35.50px;font-size:18px;line-height:18px;font-weight:400;color:#1a1a2a;transform:scaleX(0.9014);">Каса</div>
<div class="t" style="left:205.60px;top:35.50px;font-size:18px;line-height:18px;font-weight:400;color:#1a1a2a;transform:scaleX(1.0231);">Документи</div>
<div class="t" style="left:316.97px;top:35.50px;font-size:18px;line-height:18px;font-weight:400;color:#1a1a2a;transform:scaleX(1.0316);">Платежі</div>
<div class="t" style="left:406.40px;top:35.50px;font-size:18px;line-height:18px;font-weight:400;color:#1a1a2a;transform:scaleX(1.0460);">Залишки</div>
<div class="t" style="left:504.00px;top:35.50px;font-size:18px;line-height:18px;font-weight:400;color:#1a1a2a;transform:scaleX(0.9969);">Замовлення</div>
<div class="t" style="left:627.60px;top:35.50px;font-size:18px;line-height:18px;font-weight:400;color:#1a1a2a;transform:scaleX(0.9765);">Сертифікати</div>
<div class="t" style="left:752.00px;top:35.50px;font-size:18px;line-height:18px;font-weight:400;color:#1a1a2a;transform:scaleX(0.9127);">Склад</div>
<div class="t" style="left:821.46px;top:35.50px;font-size:18px;line-height:18px;font-weight:400;color:#1a1a2a;transform:scaleX(1.0363);">Філії</div>
<div class="t" style="left:880.70px;top:35.50px;font-size:18px;line-height:18px;font-weight:400;color:#1a1a2a;transform:scaleX(0.9909);">Звіти</div>
<div class="t" style="left:943.00px;top:35.50px;font-size:18px;line-height:18px;font-weight:400;color:#1a1a2a;transform:scaleX(1.0199);">Довідники</div>
<div class="t" style="left:1051.00px;top:35.50px;font-size:18px;line-height:18px;font-weight:400;color:#1a1a2a;transform:scaleX(0.9667);">eHealth</div>
<div class="t" style="left:1132.01px;top:35.50px;font-size:18px;line-height:18px;font-weight:400;color:#1a1a2a;transform:scaleX(0.9946);">Налаштування</div>
<div class="t" style="left:1276.04px;top:35.50px;font-size:18px;line-height:18px;font-weight:400;color:#1a1a2a;transform:scaleX(0.9585);">Вікна</div>
<div class="t" style="left:1341.00px;top:35.50px;font-size:18px;line-height:18px;font-weight:400;color:#1a1a2a;transform:scaleX(0.9431);">Довідка</div>
<div class="t" style="left:12.78px;top:69.60px;font-size:45px;line-height:45px;font-weight:700;color:#000;transform:scaleX(1.0176);-webkit-text-stroke:1px #000;">Одиниці виміру</div>
<div class="t" style="left:42.27px;top:129.30px;font-size:16px;line-height:16px;font-weight:400;color:#7c7c8c;transform:scaleX(1.0345);">Поиск (Tab)</div>
<div class="t" style="left:52.50px;top:165.00px;font-size:18px;line-height:18px;font-weight:400;color:#111;transform:scaleX(1.0190);">Додати</div>
<div class="t" style="left:154.39px;top:165.00px;font-size:18px;line-height:18px;font-weight:400;color:#111;transform:scaleX(1.0051);">Редагувати</div>
<div class="t" style="left:288.57px;top:165.00px;font-size:18px;line-height:18px;font-weight:400;color:#111;transform:scaleX(1.0322);">Видалити рядок</div>
<div class="t" style="left:467.70px;top:165.00px;font-size:18px;line-height:18px;font-weight:400;color:#111;transform:scaleX(1.0239);">Загальний експорт</div>
<div class="t" style="left:668.20px;top:165.00px;font-size:18px;line-height:18px;font-weight:400;color:#111;transform:scaleX(1.0641);">Друк</div>
<div class="t" style="left:2067.70px;top:165.00px;font-size:18px;line-height:18px;font-weight:400;color:#111;transform:scaleX(1.0069);">Оновити</div>
<div class="t" style="left:17.71px;top:210.80px;font-size:18px;line-height:18px;font-weight:700;color:#111;transform:scaleX(1.0863);-webkit-text-stroke:0.4px #111;">Перетягніть заголовок колонки сюди для угруповання з цього стовпцю</div>
<div class="t" style="left:35.12px;top:254.10px;font-size:16px;line-height:16px;font-weight:400;color:#111;transform:scaleX(1.1838);">ІД</div>
<div class="t" style="left:218.58px;top:254.10px;font-size:16px;line-height:16px;font-weight:400;color:#111;transform:scaleX(1.0221);">Назва</div>
<div class="t" style="left:524.90px;top:254.10px;font-size:16px;line-height:16px;font-weight:400;color:#111;transform:scaleX(1.0386);">скорочена назва</div>
<div class="t" style="left:769.90px;top:254.10px;font-size:16px;line-height:16px;font-weight:400;color:#111;transform:scaleX(1.0980);">Код</div>
<div class="t" style="left:815.64px;top:254.10px;font-size:16px;line-height:16px;font-weight:400;color:#111;transform:scaleX(1.0563);">Використовувати за замо...</div>
<div class="t" style="left:1043.22px;top:254.10px;font-size:16px;line-height:16px;font-weight:400;color:#111;transform:scaleX(1.0838);">Не використо...</div>
<div class="t" style="left:1183.20px;top:254.10px;font-size:16px;line-height:16px;font-weight:400;color:#111;transform:scaleX(1.0743);">Дата створення за...</div>
<div class="t" style="left:1358.30px;top:254.10px;font-size:16px;line-height:16px;font-weight:400;color:#111;transform:scaleX(1.0509);">Автор</div>
<div class="t" style="left:1423.99px;top:254.10px;font-size:16px;line-height:16px;font-weight:400;color:#111;transform:scaleX(1.0065);">Примітка</div>
<div class="t" style="left:32.49px;top:281.40px;font-size:16px;line-height:16px;font-weight:700;color:#fff;transform:scaleX(1.1053);-webkit-text-stroke:0.45px #fff;">18..</div>
<div class="t" style="left:72.40px;top:281.40px;font-size:16px;line-height:16px;font-weight:700;color:#fff;transform:scaleX(1.1100);-webkit-text-stroke:0.45px #fff;">Тисяча натуральних кіловольт-ампер</div>
<div class="t" style="left:420.20px;top:281.40px;font-size:16px;line-height:16px;font-weight:700;color:#fff;transform:scaleX(1.1100);-webkit-text-stroke:0.45px #fff;">Тисяча натуральних кіловольт-ампер</div>
<div class="t" style="left:1179.80px;top:281.40px;font-size:16px;line-height:16px;font-weight:700;color:#fff;transform:scaleX(1.1340);-webkit-text-stroke:0.45px #fff;">08.10.2015 23:52:48</div>
<div class="t" style="left:32.49px;top:309.90px;font-size:16px;line-height:16px;font-weight:700;color:#000;transform:scaleX(1.1053);-webkit-text-stroke:0.45px #000;">18..</div>
<div class="t" style="left:72.40px;top:309.90px;font-size:16px;line-height:16px;font-weight:700;color:#000;transform:scaleX(1.1100);-webkit-text-stroke:0.45px #000;">Тисяча натуральних кіловольт-ампе...</div>
<div class="t" style="left:420.20px;top:309.90px;font-size:16px;line-height:16px;font-weight:700;color:#000;transform:scaleX(1.1100);-webkit-text-stroke:0.45px #000;">Тисяча натуральних кіловольт-ампе...</div>
<div class="t" style="left:1179.80px;top:309.90px;font-size:16px;line-height:16px;font-weight:700;color:#000;transform:scaleX(1.1340);-webkit-text-stroke:0.45px #000;">08.10.2015 23:52:48</div>
<div class="t" style="left:32.49px;top:338.40px;font-size:16px;line-height:16px;font-weight:700;color:#000;transform:scaleX(1.1053);-webkit-text-stroke:0.45px #000;">18..</div>
<div class="t" style="left:72.40px;top:338.40px;font-size:16px;line-height:16px;font-weight:700;color:#000;transform:scaleX(1.1100);-webkit-text-stroke:0.45px #000;">Тисяча кіловольт-ампер реактивних</div>
<div class="t" style="left:420.20px;top:338.40px;font-size:16px;line-height:16px;font-weight:700;color:#000;transform:scaleX(1.1100);-webkit-text-stroke:0.45px #000;">Тисяча кіловольт-ампер реактивних</div>
<div class="t" style="left:1179.80px;top:338.40px;font-size:16px;line-height:16px;font-weight:700;color:#000;transform:scaleX(1.1340);-webkit-text-stroke:0.45px #000;">08.10.2015 23:52:48</div>
<div class="t" style="left:32.49px;top:366.90px;font-size:16px;line-height:16px;font-weight:700;color:#000;transform:scaleX(1.1053);-webkit-text-stroke:0.45px #000;">18..</div>
<div class="t" style="left:71.29px;top:366.90px;font-size:16px;line-height:16px;font-weight:700;color:#000;transform:scaleX(1.1100);-webkit-text-stroke:0.45px #000;">Мільйон кіловольт-ампер реактивних</div>
<div class="t" style="left:419.09px;top:366.90px;font-size:16px;line-height:16px;font-weight:700;color:#000;transform:scaleX(1.1100);-webkit-text-stroke:0.45px #000;">Мільйон кіловольт-ампер реактивних</div>
<div class="t" style="left:1179.80px;top:366.90px;font-size:16px;line-height:16px;font-weight:700;color:#000;transform:scaleX(1.1340);-webkit-text-stroke:0.45px #000;">08.10.2015 23:52:48</div>
<div class="t" style="left:32.49px;top:395.40px;font-size:16px;line-height:16px;font-weight:700;color:#000;transform:scaleX(1.1053);-webkit-text-stroke:0.45px #000;">18..</div>
<div class="t" style="left:72.40px;top:395.40px;font-size:16px;line-height:16px;font-weight:700;color:#000;transform:scaleX(1.1100);-webkit-text-stroke:0.45px #000;">Тисяча робочих кілокалорій за годину</div>
<div class="t" style="left:420.20px;top:395.40px;font-size:16px;line-height:16px;font-weight:700;color:#000;transform:scaleX(1.1100);-webkit-text-stroke:0.45px #000;">Тисяча робочих кілокалорій за годину</div>
<div class="t" style="left:1179.80px;top:395.40px;font-size:16px;line-height:16px;font-weight:700;color:#000;transform:scaleX(1.1340);-webkit-text-stroke:0.45px #000;">08.10.2015 23:52:48</div>
<div class="t" style="left:32.49px;top:423.90px;font-size:16px;line-height:16px;font-weight:700;color:#000;transform:scaleX(1.1053);-webkit-text-stroke:0.45px #000;">18..</div>
<div class="t" style="left:72.40px;top:423.90px;font-size:16px;line-height:16px;font-weight:700;color:#000;transform:scaleX(1.1100);-webkit-text-stroke:0.45px #000;">Тисяча кубічних метрів стічних вод з...</div>
<div class="t" style="left:420.20px;top:423.90px;font-size:16px;line-height:16px;font-weight:700;color:#000;transform:scaleX(1.1100);-webkit-text-stroke:0.45px #000;">Тисяча кубічних метрів стічних вод з...</div>
<div class="t" style="left:1179.80px;top:423.90px;font-size:16px;line-height:16px;font-weight:700;color:#000;transform:scaleX(1.1340);-webkit-text-stroke:0.45px #000;">08.10.2015 23:52:48</div>
<div class="t" style="left:32.49px;top:452.40px;font-size:16px;line-height:16px;font-weight:700;color:#000;transform:scaleX(1.1053);-webkit-text-stroke:0.45px #000;">18..</div>
<div class="t" style="left:72.40px;top:452.40px;font-size:16px;line-height:16px;font-weight:700;color:#000;transform:scaleX(1.1100);-webkit-text-stroke:0.45px #000;">Тисяча кубічних метрів обігової води...</div>
<div class="t" style="left:420.20px;top:452.40px;font-size:16px;line-height:16px;font-weight:700;color:#000;transform:scaleX(1.1100);-webkit-text-stroke:0.45px #000;">Тисяча кубічних метрів обігової води...</div>
<div class="t" style="left:1179.80px;top:452.40px;font-size:16px;line-height:16px;font-weight:700;color:#000;transform:scaleX(1.1340);-webkit-text-stroke:0.45px #000;">08.10.2015 23:52:48</div>
<div class="t" style="left:32.49px;top:480.90px;font-size:16px;line-height:16px;font-weight:700;color:#000;transform:scaleX(1.1053);-webkit-text-stroke:0.45px #000;">18..</div>
<div class="t" style="left:71.29px;top:480.90px;font-size:16px;line-height:16px;font-weight:700;color:#000;transform:scaleX(1.1100);-webkit-text-stroke:0.45px #000;">Кілометр водоводу та мережі</div>
<div class="t" style="left:419.09px;top:480.90px;font-size:16px;line-height:16px;font-weight:700;color:#000;transform:scaleX(1.1100);-webkit-text-stroke:0.45px #000;">Кілометр водоводу та мережі</div>
<div class="t" style="left:1179.80px;top:480.90px;font-size:16px;line-height:16px;font-weight:700;color:#000;transform:scaleX(1.1340);-webkit-text-stroke:0.45px #000;">08.10.2015 23:52:48</div>
<div class="t" style="left:32.49px;top:509.40px;font-size:16px;line-height:16px;font-weight:700;color:#000;transform:scaleX(1.1053);-webkit-text-stroke:0.45px #000;">18..</div>
<div class="t" style="left:71.29px;top:509.40px;font-size:16px;line-height:16px;font-weight:700;color:#000;transform:scaleX(1.1100);-webkit-text-stroke:0.45px #000;">Кілометр колектора та мережі</div>
<div class="t" style="left:419.09px;top:509.40px;font-size:16px;line-height:16px;font-weight:700;color:#000;transform:scaleX(1.1100);-webkit-text-stroke:0.45px #000;">Кілометр колектора та мережі</div>
<div class="t" style="left:1179.80px;top:509.40px;font-size:16px;line-height:16px;font-weight:700;color:#000;transform:scaleX(1.1340);-webkit-text-stroke:0.45px #000;">08.10.2015 23:52:48</div>
<div class="t" style="left:32.49px;top:537.90px;font-size:16px;line-height:16px;font-weight:700;color:#000;transform:scaleX(1.1053);-webkit-text-stroke:0.45px #000;">18..</div>
<div class="t" style="left:71.29px;top:537.90px;font-size:16px;line-height:16px;font-weight:700;color:#000;transform:scaleX(1.1100);-webkit-text-stroke:0.45px #000;">Кілометр мережі газифікації</div>
<div class="t" style="left:419.09px;top:537.90px;font-size:16px;line-height:16px;font-weight:700;color:#000;transform:scaleX(1.1100);-webkit-text-stroke:0.45px #000;">Кілометр мережі газифікації</div>
<div class="t" style="left:1179.80px;top:537.90px;font-size:16px;line-height:16px;font-weight:700;color:#000;transform:scaleX(1.1340);-webkit-text-stroke:0.45px #000;">08.10.2015 23:52:48</div>
<div class="t" style="left:32.49px;top:566.40px;font-size:16px;line-height:16px;font-weight:700;color:#000;transform:scaleX(1.1053);-webkit-text-stroke:0.45px #000;">18..</div>
<div class="t" style="left:71.29px;top:566.40px;font-size:16px;line-height:16px;font-weight:700;color:#000;transform:scaleX(1.1100);-webkit-text-stroke:0.45px #000;">Кубічний метр на тисячу жителів</div>
<div class="t" style="left:419.09px;top:566.40px;font-size:16px;line-height:16px;font-weight:700;color:#000;transform:scaleX(1.1100);-webkit-text-stroke:0.45px #000;">Кубічний метр на тисячу жителів</div>
<div class="t" style="left:1179.80px;top:566.40px;font-size:16px;line-height:16px;font-weight:700;color:#000;transform:scaleX(1.1340);-webkit-text-stroke:0.45px #000;">08.10.2015 23:52:48</div>
<div class="t" style="left:32.49px;top:594.90px;font-size:16px;line-height:16px;font-weight:700;color:#000;transform:scaleX(1.1053);-webkit-text-stroke:0.45px #000;">18..</div>
<div class="t" style="left:72.40px;top:594.90px;font-size:16px;line-height:16px;font-weight:700;color:#000;transform:scaleX(1.1100);-webkit-text-stroke:0.45px #000;">*Ефективна потужність</div>
<div class="t" style="left:420.20px;top:594.90px;font-size:16px;line-height:16px;font-weight:700;color:#000;transform:scaleX(1.1100);-webkit-text-stroke:0.45px #000;">*Ефективна потужність</div>
<div class="t" style="left:1179.80px;top:594.90px;font-size:16px;line-height:16px;font-weight:700;color:#000;transform:scaleX(1.1340);-webkit-text-stroke:0.45px #000;">08.10.2015 23:52:48</div>
<div class="t" style="left:32.49px;top:623.40px;font-size:16px;line-height:16px;font-weight:700;color:#000;transform:scaleX(1.1053);-webkit-text-stroke:0.45px #000;">18..</div>
<div class="t" style="left:71.29px;top:623.40px;font-size:16px;line-height:16px;font-weight:700;color:#000;transform:scaleX(1.1100);-webkit-text-stroke:0.45px #000;">Ват-година на оберт</div>
<div class="t" style="left:419.09px;top:623.40px;font-size:16px;line-height:16px;font-weight:700;color:#000;transform:scaleX(1.1100);-webkit-text-stroke:0.45px #000;">Ват-година на оберт</div>
<div class="t" style="left:1179.80px;top:623.40px;font-size:16px;line-height:16px;font-weight:700;color:#000;transform:scaleX(1.1340);-webkit-text-stroke:0.45px #000;">08.10.2015 23:52:48</div>
<div class="t" style="left:32.49px;top:651.90px;font-size:16px;line-height:16px;font-weight:700;color:#000;transform:scaleX(1.1053);-webkit-text-stroke:0.45px #000;">18..</div>
<div class="t" style="left:71.29px;top:651.90px;font-size:16px;line-height:16px;font-weight:700;color:#000;transform:scaleX(1.1100);-webkit-text-stroke:0.45px #000;">Вар-година на оберт</div>
<div class="t" style="left:419.09px;top:651.90px;font-size:16px;line-height:16px;font-weight:700;color:#000;transform:scaleX(1.1100);-webkit-text-stroke:0.45px #000;">Вар-година на оберт</div>
<div class="t" style="left:1179.80px;top:651.90px;font-size:16px;line-height:16px;font-weight:700;color:#000;transform:scaleX(1.1340);-webkit-text-stroke:0.45px #000;">08.10.2015 23:52:48</div>
<div class="t" style="left:32.49px;top:680.40px;font-size:16px;line-height:16px;font-weight:700;color:#000;transform:scaleX(1.1053);-webkit-text-stroke:0.45px #000;">18..</div>
<div class="t" style="left:72.40px;top:680.40px;font-size:16px;line-height:16px;font-weight:700;color:#000;transform:scaleX(1.1100);-webkit-text-stroke:0.45px #000;">Оберт на кіловат-годину</div>
<div class="t" style="left:420.20px;top:680.40px;font-size:16px;line-height:16px;font-weight:700;color:#000;transform:scaleX(1.1100);-webkit-text-stroke:0.45px #000;">Оберт на кіловат-годину</div>
<div class="t" style="left:1179.80px;top:680.40px;font-size:16px;line-height:16px;font-weight:700;color:#000;transform:scaleX(1.1340);-webkit-text-stroke:0.45px #000;">08.10.2015 23:52:48</div>
<div class="t" style="left:32.49px;top:708.90px;font-size:16px;line-height:16px;font-weight:700;color:#000;transform:scaleX(1.1053);-webkit-text-stroke:0.45px #000;">18..</div>
<div class="t" style="left:72.40px;top:708.90px;font-size:16px;line-height:16px;font-weight:700;color:#000;transform:scaleX(1.1100);-webkit-text-stroke:0.45px #000;">Оберт на кіловар-годину</div>
<div class="t" style="left:420.20px;top:708.90px;font-size:16px;line-height:16px;font-weight:700;color:#000;transform:scaleX(1.1100);-webkit-text-stroke:0.45px #000;">Оберт на кіловар-годину</div>
<div class="t" style="left:1179.80px;top:708.90px;font-size:16px;line-height:16px;font-weight:700;color:#000;transform:scaleX(1.1340);-webkit-text-stroke:0.45px #000;">08.10.2015 23:52:48</div>
<div class="t" style="left:32.49px;top:737.40px;font-size:16px;line-height:16px;font-weight:700;color:#000;transform:scaleX(1.1053);-webkit-text-stroke:0.45px #000;">18..</div>
<div class="t" style="left:71.29px;top:737.40px;font-size:16px;line-height:16px;font-weight:700;color:#000;transform:scaleX(1.1100);-webkit-text-stroke:0.45px #000;">Відсоток на 1 °С</div>
<div class="t" style="left:419.09px;top:737.40px;font-size:16px;line-height:16px;font-weight:700;color:#000;transform:scaleX(1.1100);-webkit-text-stroke:0.45px #000;">Відсоток на 1 °С</div>
<div class="t" style="left:1179.80px;top:737.40px;font-size:16px;line-height:16px;font-weight:700;color:#000;transform:scaleX(1.1340);-webkit-text-stroke:0.45px #000;">08.10.2015 23:52:48</div>
<div class="t" style="left:32.49px;top:765.90px;font-size:16px;line-height:16px;font-weight:700;color:#000;transform:scaleX(1.1053);-webkit-text-stroke:0.45px #000;">18..</div>
<div class="t" style="left:71.29px;top:765.90px;font-size:16px;line-height:16px;font-weight:700;color:#000;transform:scaleX(1.1100);-webkit-text-stroke:0.45px #000;">Кіловат-година на поділку</div>
<div class="t" style="left:419.09px;top:765.90px;font-size:16px;line-height:16px;font-weight:700;color:#000;transform:scaleX(1.1100);-webkit-text-stroke:0.45px #000;">Кіловат-година на поділку</div>
<div class="t" style="left:1179.80px;top:765.90px;font-size:16px;line-height:16px;font-weight:700;color:#000;transform:scaleX(1.1340);-webkit-text-stroke:0.45px #000;">08.10.2015 23:52:48</div>
<div class="t" style="left:32.49px;top:794.40px;font-size:16px;line-height:16px;font-weight:700;color:#000;transform:scaleX(1.1053);-webkit-text-stroke:0.45px #000;">18..</div>
<div class="t" style="left:71.29px;top:794.40px;font-size:16px;line-height:16px;font-weight:700;color:#000;transform:scaleX(1.1100);-webkit-text-stroke:0.45px #000;">Мегават-година на поділку</div>
<div class="t" style="left:419.09px;top:794.40px;font-size:16px;line-height:16px;font-weight:700;color:#000;transform:scaleX(1.1100);-webkit-text-stroke:0.45px #000;">Мегават-година на поділку</div>
<div class="t" style="left:1179.80px;top:794.40px;font-size:16px;line-height:16px;font-weight:700;color:#000;transform:scaleX(1.1340);-webkit-text-stroke:0.45px #000;">08.10.2015 23:52:48</div>
<div class="t" style="left:32.49px;top:822.90px;font-size:16px;line-height:16px;font-weight:700;color:#000;transform:scaleX(1.1053);-webkit-text-stroke:0.45px #000;">18..</div>
<div class="t" style="left:72.40px;top:822.90px;font-size:16px;line-height:16px;font-weight:700;color:#000;transform:scaleX(1.1100);-webkit-text-stroke:0.45px #000;">Децибел-ампер</div>
<div class="t" style="left:420.20px;top:822.90px;font-size:16px;line-height:16px;font-weight:700;color:#000;transform:scaleX(1.1100);-webkit-text-stroke:0.45px #000;">Децибел-ампер</div>
<div class="t" style="left:1179.80px;top:822.90px;font-size:16px;line-height:16px;font-weight:700;color:#000;transform:scaleX(1.1340);-webkit-text-stroke:0.45px #000;">08.10.2015 23:52:48</div>
<div class="t" style="left:32.49px;top:851.40px;font-size:16px;line-height:16px;font-weight:700;color:#000;transform:scaleX(1.1053);-webkit-text-stroke:0.45px #000;">19..</div>
<div class="t" style="left:71.29px;top:851.40px;font-size:16px;line-height:16px;font-weight:700;color:#000;transform:scaleX(1.1100);-webkit-text-stroke:0.45px #000;">Квадратний метр житлової площі</div>
<div class="t" style="left:419.09px;top:851.40px;font-size:16px;line-height:16px;font-weight:700;color:#000;transform:scaleX(1.1100);-webkit-text-stroke:0.45px #000;">Квадратний метр житлової площі</div>
<div class="t" style="left:1179.80px;top:851.40px;font-size:16px;line-height:16px;font-weight:700;color:#000;transform:scaleX(1.1340);-webkit-text-stroke:0.45px #000;">08.10.2015 23:52:48</div>
<div class="t" style="left:32.49px;top:879.90px;font-size:16px;line-height:16px;font-weight:700;color:#000;transform:scaleX(1.1053);-webkit-text-stroke:0.45px #000;">19..</div>
<div class="t" style="left:72.40px;top:879.90px;font-size:16px;line-height:16px;font-weight:700;color:#000;transform:scaleX(1.1100);-webkit-text-stroke:0.45px #000;">Тисяча квадратних метрів житлової ...</div>
<div class="t" style="left:420.20px;top:879.90px;font-size:16px;line-height:16px;font-weight:700;color:#000;transform:scaleX(1.1100);-webkit-text-stroke:0.45px #000;">Тисяча квадратних метрів житлової ...</div>
<div class="t" style="left:1179.80px;top:879.90px;font-size:16px;line-height:16px;font-weight:700;color:#000;transform:scaleX(1.1340);-webkit-text-stroke:0.45px #000;">08.10.2015 23:52:48</div>
<div class="t" style="left:32.49px;top:908.40px;font-size:16px;line-height:16px;font-weight:700;color:#000;transform:scaleX(1.1053);-webkit-text-stroke:0.45px #000;">19..</div>
<div class="t" style="left:71.29px;top:908.40px;font-size:16px;line-height:16px;font-weight:700;color:#000;transform:scaleX(1.1100);-webkit-text-stroke:0.45px #000;">Мільйон квадратних метрів житлово...</div>
<div class="t" style="left:419.09px;top:908.40px;font-size:16px;line-height:16px;font-weight:700;color:#000;transform:scaleX(1.1100);-webkit-text-stroke:0.45px #000;">Мільйон квадратних метрів житлово...</div>
<div class="t" style="left:1179.80px;top:908.40px;font-size:16px;line-height:16px;font-weight:700;color:#000;transform:scaleX(1.1340);-webkit-text-stroke:0.45px #000;">08.10.2015 23:52:48</div>
<div class="t" style="left:32.49px;top:936.90px;font-size:16px;line-height:16px;font-weight:700;color:#000;transform:scaleX(1.1053);-webkit-text-stroke:0.45px #000;">19..</div>
<div class="t" style="left:72.40px;top:936.90px;font-size:16px;line-height:16px;font-weight:700;color:#000;transform:scaleX(1.1100);-webkit-text-stroke:0.45px #000;">Тисяча квадратних метрів підлоги</div>
<div class="t" style="left:420.20px;top:936.90px;font-size:16px;line-height:16px;font-weight:700;color:#000;transform:scaleX(1.1100);-webkit-text-stroke:0.45px #000;">Тисяча квадратних метрів підлоги</div>
<div class="t" style="left:1179.80px;top:936.90px;font-size:16px;line-height:16px;font-weight:700;color:#000;transform:scaleX(1.1340);-webkit-text-stroke:0.45px #000;">08.10.2015 23:52:48</div>
<div class="t" style="left:32.49px;top:965.40px;font-size:16px;line-height:16px;font-weight:700;color:#000;transform:scaleX(1.1053);-webkit-text-stroke:0.45px #000;">19..</div>
<div class="t" style="left:71.29px;top:965.40px;font-size:16px;line-height:16px;font-weight:700;color:#000;transform:scaleX(1.1100);-webkit-text-stroke:0.45px #000;">Квадратний метр загальної площі</div>
<div class="t" style="left:419.09px;top:965.40px;font-size:16px;line-height:16px;font-weight:700;color:#000;transform:scaleX(1.1100);-webkit-text-stroke:0.45px #000;">Квадратний метр загальної площі</div>
<div class="t" style="left:1179.80px;top:965.40px;font-size:16px;line-height:16px;font-weight:700;color:#000;transform:scaleX(1.1340);-webkit-text-stroke:0.45px #000;">08.10.2015 23:52:48</div>
<div class="t" style="left:32.49px;top:993.90px;font-size:16px;line-height:16px;font-weight:700;color:#000;transform:scaleX(1.1053);-webkit-text-stroke:0.45px #000;">19..</div>
<div class="t" style="left:72.40px;top:993.90px;font-size:16px;line-height:16px;font-weight:700;color:#000;transform:scaleX(1.1100);-webkit-text-stroke:0.45px #000;">Тисяча квадратних метрів загальної...</div>
<div class="t" style="left:420.20px;top:993.90px;font-size:16px;line-height:16px;font-weight:700;color:#000;transform:scaleX(1.1100);-webkit-text-stroke:0.45px #000;">Тисяча квадратних метрів загальної...</div>
<div class="t" style="left:1179.80px;top:993.90px;font-size:16px;line-height:16px;font-weight:700;color:#000;transform:scaleX(1.1340);-webkit-text-stroke:0.45px #000;">08.10.2015 23:52:48</div>
<div class="t" style="left:32.49px;top:1022.40px;font-size:16px;line-height:16px;font-weight:700;color:#000;transform:scaleX(1.1053);-webkit-text-stroke:0.45px #000;">19..</div>
<div class="t" style="left:71.29px;top:1022.40px;font-size:16px;line-height:16px;font-weight:700;color:#000;transform:scaleX(1.1100);-webkit-text-stroke:0.45px #000;">Мільйон квадратних метрів загальн...</div>
<div class="t" style="left:419.09px;top:1022.40px;font-size:16px;line-height:16px;font-weight:700;color:#000;transform:scaleX(1.1100);-webkit-text-stroke:0.45px #000;">Мільйон квадратних метрів загальн...</div>
<div class="t" style="left:1179.80px;top:1022.40px;font-size:16px;line-height:16px;font-weight:700;color:#000;transform:scaleX(1.1340);-webkit-text-stroke:0.45px #000;">08.10.2015 23:52:48</div>
<div class="t" style="left:32.49px;top:1050.90px;font-size:16px;line-height:16px;font-weight:700;color:#000;transform:scaleX(1.1053);-webkit-text-stroke:0.45px #000;">19..</div>
<div class="t" style="left:72.40px;top:1050.90px;font-size:16px;line-height:16px;font-weight:700;color:#000;transform:scaleX(1.1100);-webkit-text-stroke:0.45px #000;">Тисяча квадратних метрів покриття</div>
<div class="t" style="left:420.20px;top:1050.90px;font-size:16px;line-height:16px;font-weight:700;color:#000;transform:scaleX(1.1100);-webkit-text-stroke:0.45px #000;">Тисяча квадратних метрів покриття</div>
<div class="t" style="left:1179.80px;top:1050.90px;font-size:16px;line-height:16px;font-weight:700;color:#000;transform:scaleX(1.1340);-webkit-text-stroke:0.45px #000;">08.10.2015 23:52:48</div>
<div class="t" style="left:32.49px;top:1079.40px;font-size:16px;line-height:16px;font-weight:700;color:#000;transform:scaleX(1.1053);-webkit-text-stroke:0.45px #000;">19..</div>
<div class="t" style="left:71.29px;top:1079.40px;font-size:16px;line-height:16px;font-weight:700;color:#000;transform:scaleX(1.1100);-webkit-text-stroke:0.45px #000;">Квадратний метр покриття будівлі</div>
<div class="t" style="left:419.09px;top:1079.40px;font-size:16px;line-height:16px;font-weight:700;color:#000;transform:scaleX(1.1100);-webkit-text-stroke:0.45px #000;">Квадратний метр покриття будівлі</div>
<div class="t" style="left:1179.80px;top:1079.40px;font-size:16px;line-height:16px;font-weight:700;color:#000;transform:scaleX(1.1340);-webkit-text-stroke:0.45px #000;">08.10.2015 23:52:48</div>
<div class="t" style="left:32.49px;top:1107.90px;font-size:16px;line-height:16px;font-weight:700;color:#000;transform:scaleX(1.1053);-webkit-text-stroke:0.45px #000;">19..</div>
<div class="t" style="left:72.40px;top:1107.90px;font-size:16px;line-height:16px;font-weight:700;color:#000;transform:scaleX(1.1100);-webkit-text-stroke:0.45px #000;">Тисяча квадратних метрів покриття ...</div>
<div class="t" style="left:420.20px;top:1107.90px;font-size:16px;line-height:16px;font-weight:700;color:#000;transform:scaleX(1.1100);-webkit-text-stroke:0.45px #000;">Тисяча квадратних метрів покриття ...</div>
<div class="t" style="left:1179.80px;top:1107.90px;font-size:16px;line-height:16px;font-weight:700;color:#000;transform:scaleX(1.1340);-webkit-text-stroke:0.45px #000;">08.10.2015 23:52:48</div>
<div class="t" style="left:32.49px;top:1136.40px;font-size:16px;line-height:16px;font-weight:700;color:#000;transform:scaleX(1.1053);-webkit-text-stroke:0.45px #000;">19..</div>
<div class="t" style="left:71.29px;top:1136.40px;font-size:16px;line-height:16px;font-weight:700;color:#000;transform:scaleX(1.1100);-webkit-text-stroke:0.45px #000;">Панель</div>
<div class="t" style="left:419.09px;top:1136.40px;font-size:16px;line-height:16px;font-weight:700;color:#000;transform:scaleX(1.1100);-webkit-text-stroke:0.45px #000;">Панель</div>
<div class="t" style="left:1179.80px;top:1136.40px;font-size:16px;line-height:16px;font-weight:700;color:#000;transform:scaleX(1.1340);-webkit-text-stroke:0.45px #000;">08.10.2015 23:52:48</div>
<div class="t" style="left:32.49px;top:1164.90px;font-size:16px;line-height:16px;font-weight:700;color:#000;transform:scaleX(1.1053);-webkit-text-stroke:0.45px #000;">19..</div>
<div class="t" style="left:72.40px;top:1164.90px;font-size:16px;line-height:16px;font-weight:700;color:#000;transform:scaleX(1.1100);-webkit-text-stroke:0.45px #000;">Тисяча панелей</div>
<div class="t" style="left:420.20px;top:1164.90px;font-size:16px;line-height:16px;font-weight:700;color:#000;transform:scaleX(1.1100);-webkit-text-stroke:0.45px #000;">Тисяча панелей</div>
<div class="t" style="left:1179.80px;top:1164.90px;font-size:16px;line-height:16px;font-weight:700;color:#000;transform:scaleX(1.1340);-webkit-text-stroke:0.45px #000;">08.10.2015 23:52:48</div>
<div class="t" style="left:32.49px;top:1193.40px;font-size:16px;line-height:16px;font-weight:700;color:#000;transform:scaleX(1.1053);-webkit-text-stroke:0.45px #000;">19..</div>
<div class="t" style="left:72.40px;top:1193.40px;font-size:16px;line-height:16px;font-weight:700;color:#000;transform:scaleX(1.1100);-webkit-text-stroke:0.45px #000;">Тисяча квадратних метрів покрівель...</div>
<div class="t" style="left:420.20px;top:1193.40px;font-size:16px;line-height:16px;font-weight:700;color:#000;transform:scaleX(1.1100);-webkit-text-stroke:0.45px #000;">Тисяча квадратних метрів покрівель...</div>
<div class="t" style="left:1179.80px;top:1193.40px;font-size:16px;line-height:16px;font-weight:700;color:#000;transform:scaleX(1.1340);-webkit-text-stroke:0.45px #000;">08.10.2015 23:52:48</div>
<div class="t" style="left:32.49px;top:1221.90px;font-size:16px;line-height:16px;font-weight:700;color:#000;transform:scaleX(1.1053);-webkit-text-stroke:0.45px #000;">19..</div>
<div class="t" style="left:71.29px;top:1221.90px;font-size:16px;line-height:16px;font-weight:700;color:#000;transform:scaleX(1.1100);-webkit-text-stroke:0.45px #000;">Квартира</div>
<div class="t" style="left:419.09px;top:1221.90px;font-size:16px;line-height:16px;font-weight:700;color:#000;transform:scaleX(1.1100);-webkit-text-stroke:0.45px #000;">Квартира</div>
<div class="t" style="left:1179.80px;top:1221.90px;font-size:16px;line-height:16px;font-weight:700;color:#000;transform:scaleX(1.1340);-webkit-text-stroke:0.45px #000;">08.10.2015 23:52:48</div>
<div class="t" style="left:32.49px;top:1250.40px;font-size:16px;line-height:16px;font-weight:700;color:#000;transform:scaleX(1.1053);-webkit-text-stroke:0.45px #000;">19..</div>
<div class="t" style="left:72.40px;top:1250.40px;font-size:16px;line-height:16px;font-weight:700;color:#000;transform:scaleX(1.1100);-webkit-text-stroke:0.45px #000;">Тисяча квартир</div>
<div class="t" style="left:420.20px;top:1250.40px;font-size:16px;line-height:16px;font-weight:700;color:#000;transform:scaleX(1.1100);-webkit-text-stroke:0.45px #000;">Тисяча квартир</div>
<div class="t" style="left:1179.80px;top:1250.40px;font-size:16px;line-height:16px;font-weight:700;color:#000;transform:scaleX(1.1340);-webkit-text-stroke:0.45px #000;">08.10.2015 23:52:48</div>
<div class="t" style="left:74.70px;top:1281.70px;font-size:16px;line-height:16px;font-weight:700;color:#111;transform:scaleX(1.0948);-webkit-text-stroke:0.45px #111;">Запис 1 із 1616</div>
<div class="t" style="left:14.98px;top:1318.20px;font-size:16px;line-height:16px;font-weight:400;color:#111;transform:scaleX(1.0219);">Головна</div>
<div class="t" style="left:205.00px;top:1318.20px;font-size:16px;line-height:16px;font-weight:400;color:#111;transform:scaleX(0.9946);">Одиниці виміру</div>
<div class="t" style="left:35.91px;top:1353.70px;font-size:18.5px;line-height:18.5px;font-weight:400;color:#111;transform:scaleX(0.8926);">База даних: TASA3@TITAN</div>
<div class="t" style="left:334.33px;top:1353.70px;font-size:18.5px;line-height:18.5px;font-weight:400;color:#111;transform:scaleX(0.8718);">Користувач: GIFT</div>
<div class="t" style="left:641.50px;top:1353.70px;font-size:18.5px;line-height:18.5px;font-weight:400;color:#111;transform:scaleX(0.8300);">3</div>
<div class="t" style="left:671.50px;top:1353.70px;font-size:18.5px;line-height:18.5px;font-weight:400;color:#111;transform:scaleX(0.8989);">Кассовый аппарат не подключен</div>
<div class="t" style="left:1128.60px;top:1353.70px;font-size:18.5px;line-height:18.5px;font-weight:400;color:#111;transform:scaleX(0.8807);">Зона: Склад [1]</div>
<svg style="position:absolute;left:0;top:0" width="2170" height="1375">
<defs><filter id="sh" x="-5%" y="-5%" width="110%" height="110%"><feDropShadow dx="0.8" dy="1" stdDeviation="0.55" flood-color="#000" flood-opacity="0.5"/></filter></defs>
<g filter="url(#sh)" fill="none" stroke="#ff0000" stroke-width="4.2" stroke-linejoin="miter">
<rect x="6" y="120" width="2157" height="74" rx="1"/>
<rect x="5" y="204" width="2156" height="1106" rx="1"/>
</g>
<g filter="url(#sh)" fill="#ff0000">
<path d="M1457.2 36.8 L1457.8 38.4 L1239.2 115.6 L1241 120.8 L1222.3 118.7 L1235.8 105.6 L1237.6 110.8 Z"/>
<path d="M1618.3 42.3 L1618.9 43.9 L1224.1 195.6 L1226.0 200.8 L1207.3 199.3 L1220.4 185.8 L1222.3 191.0 Z"/>
</g>
<g font-family="Liberation Sans" font-weight="700" font-size="33" fill="#ff0000" stroke="#fff" stroke-width="3" paint-order="stroke" filter="url(#sh)">
<text x="1459" y="46">1</text><text x="1634" y="49.6">2</text></g>
</svg>
</body></html>
